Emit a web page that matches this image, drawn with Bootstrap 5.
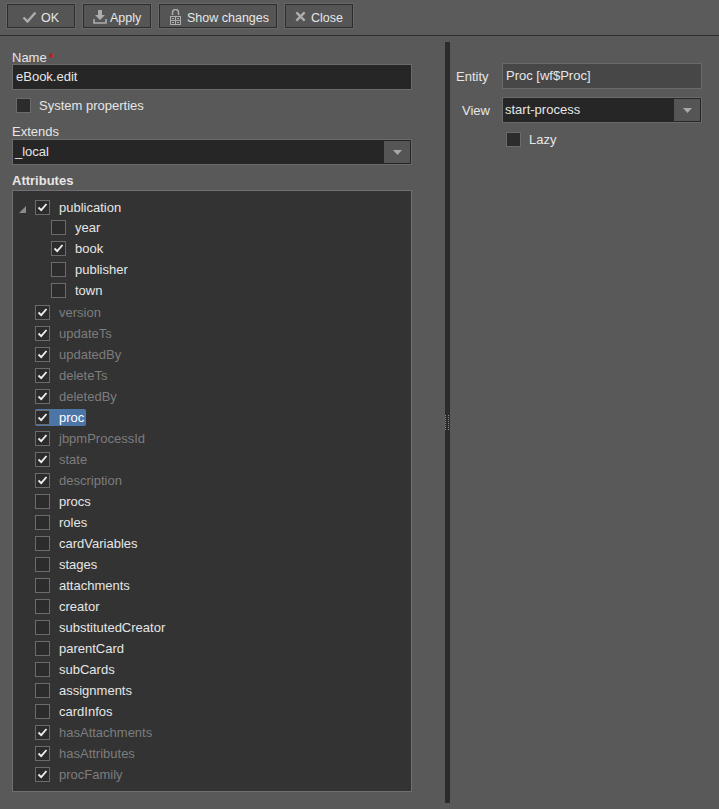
<!DOCTYPE html>
<html lang="en"><head><meta charset="utf-8"><title>View editor</title>
<link rel="stylesheet" href="https://cdn.jsdelivr.net/npm/bootstrap@5.3.0/dist/css/bootstrap.min.css">
<style>
html,body{height:100%;}
body{background:#595959;color:#e6e6e6;font-family:"Liberation Sans",Arial,sans-serif;font-size:13px;line-height:15px;overflow:hidden;}
.bar{height:36px;padding:4px 7px 0;gap:8px;border-bottom:1px solid #2f2f2f;background:#5b5b5b;}
.tbtn{height:24px;background:#555;border:1px solid #2d2d2d;box-shadow:0 0 0 1px #666;color:#e6e6e6;font-size:12.5px;padding:5px 0 0 12px;gap:4px;border-radius:0;white-space:nowrap;}
.tbtn svg{flex:none;margin-top:-4px;}
.w-ok{width:68px;padding-left:14px;}.w-apply{width:68px;padding-left:9px;gap:3px;}.w-show{width:118px;padding-left:9px;gap:5px;}.w-close{width:68px;padding-left:9px;gap:5px;}
.panes{height:773px;}
.pane-l{width:445px;padding:7px 33px 0 12px;flex:none;}
.split{width:5px;height:761px;margin-top:6px;background:#2b2b2b;flex:none;}
.grip{display:grid;grid-template-columns:2px 2px;gap:1px;}
.grip i{width:1px;height:1px;background:#8a8a8a;display:block;}
.pane-r{flex:1;padding:27px 17px 0 6px;}
.lbl{display:block;height:15px;}
.req{color:#e00;margin-left:2px;}
.field{height:26px;background:#262626;border:1px solid #6a6a6a;color:#e6e6e6;padding:0 3px;line-height:24px;}
.field.ro{background:#474747;}
.sel{height:26px;background:#262626;border:1px solid #6a6a6a;line-height:23px;padding:0 0 0 2px;}
.sel span{flex:1;}
.arrow{width:26px;margin:1px;background:#555;}
.cb{width:15px;height:15px;background:#2c2c2c;border:1px solid #6b6b6b;flex:none;}
.sys{height:16px;margin:7px 0 0 4px;gap:8px;}
.tree{height:602px;margin-top:2px;background:#333;border:1px solid #707070;padding:6px 0 0 22px;}
.trow{height:21px;gap:9px;}
.trow.first{height:20px;}
.trow.sub{margin-left:16px;}
.trow.gap{margin-top:1px;}
.tname{padding:1px 2px 1px 0;}
.muted{color:#7d7d7d;}
.sel-row{background:#4d76a8;border-radius:2px;gap:9px;}
.sel-row .tname{color:#fff;padding-right:2px;}
.tog{position:absolute;margin-left:-16px;margin-top:4px;}
.rlab{width:46px;flex:none;}
.rlab-end{text-align:right;padding-right:12px;}
.lazy{margin:9px 0 0 50px;gap:8px;}
.name-lbl{height:14px;}
.ext-lbl{margin-top:11px;}
</style></head><body>
<div class="bar d-flex align-items-start">
<button class="btn tbtn w-ok d-flex align-items-center"><svg width="15" height="12" viewBox="0 0 15 12"><path d="M1.500 6.500 5.500 10.500 13.500 1.500" fill="none" stroke="#adadad" stroke-width="2.400"/></svg>OK</button>
<button class="btn tbtn w-apply d-flex align-items-center"><svg width="14" height="14" viewBox="0 0 14 14"><path d="M5 0h4v5h3L7 10 2 5h3z" fill="#adadad"/><path d="M1 9v4h12V9" fill="none" stroke="#adadad" stroke-width="1.600"/></svg>Apply</button>
<button class="btn tbtn w-show d-flex align-items-center"><svg width="13" height="16" viewBox="0 0 13 16"><path d="M3.500 6V3.500a3 3 0 0 1 6 0V6" fill="none" stroke="#adadad" stroke-width="1.500"/><rect x="1.500" y="7.500" width="10" height="8" fill="none" stroke="#adadad"/><path d="M6.500 7.500v8M1.500 11.500h10M3 9.500h2M8 9.500h2M3 13.500h2M8 13.500h2" stroke="#adadad" fill="none"/></svg>Show changes</button>
<button class="btn tbtn w-close d-flex align-items-center"><svg width="11" height="11" viewBox="0 0 12 12"><path d="M1.500 1.500l9 9M10.500 1.500l-9 9" stroke="#adadad" stroke-width="2.600" fill="none"/></svg>Close</button>
</div>
<div class="panes d-flex">
<div class="pane-l">
<div style="height:7px"></div>
<label class="lbl name-lbl">Name<span class="req">*</span></label>
<div class="field">eBook.edit</div>
<div class="sys d-flex align-items-center"><span class="cb"></span><span>System properties</span></div>
<label class="lbl ext-lbl">Extends</label>
<div class="sel d-flex"><span>_local</span><div class="arrow d-flex align-items-center justify-content-center"><svg width="9" height="5"><path d="M0 0h9L4.500 5z" fill="#a8a8a8"/></svg></div></div>
<div class="fw-bold" style="margin-top:8px;height:15px">Attributes</div>
<div class="tree" id="tree"></div>
</div>
<div class="split d-flex align-items-center justify-content-center"><div class="grip" id="grip"></div></div>
<div class="pane-r">
<div class="d-flex align-items-center"><span class="rlab">Entity</span><div class="field ro flex-fill">Proc [wf$Proc]</div></div>
<div class="d-flex align-items-center" style="margin-top:8px"><span class="rlab rlab-end">View</span><div class="sel d-flex flex-fill"><span>start-process</span><div class="arrow d-flex align-items-center justify-content-center"><svg width="9" height="5"><path d="M0 0h9L4.500 5z" fill="#a8a8a8"/></svg></div></div></div>
<div class="lazy d-flex align-items-center"><span class="cb"></span><span>Lazy</span></div>
</div>
</div>
<script>
var chk='<svg width="13" height="13" viewBox="0 0 13 13" style="display:block"><path d="M2.500 6.500 5.200 9.200 10.500 3" fill="none" stroke="#f0f0f0" stroke-width="1.800"/></svg>';
var rows=[["publication",1,0,0],["year",0,0,1],["book",1,0,1],["publisher",0,0,1],["town",0,0,1],
["version",1,1],["updateTs",1,1],["updatedBy",1,1],["deleteTs",1,1],["deletedBy",1,1],["proc",1,2],["jbpmProcessId",1,1],["state",1,1],["description",1,1],
["procs",0],["roles",0],["cardVariables",0],["stages",0],["attachments",0],["creator",0],["substitutedCreator",0],["parentCard",0],["subCards",0],["assignments",0],["cardInfos",0],["hasAttachments",1,1],["hasAttributes",1,1],["procFamily",1,1]];
document.getElementById('tree').innerHTML=rows.map(function(r,i){
var inner='<span class="cb">'+(r[1]?chk:'')+'</span><span class="tname'+(r[2]==1?' muted':'')+'">'+r[0]+'</span>';
if(r[2]==2) inner='<span class="d-inline-flex align-items-center sel-row">'+inner+'</span>';
var tog=i==0?'<svg class="tog" width="7" height="7"><path d="M7 0v7H0z" fill="#8a8a8a"/></svg>':'';
return '<div class="trow d-flex align-items-center'+(i==0?' first':'')+(r[3]?' sub':'')+(i==5?' gap':'')+'">'+tog+inner+'</div>';
}).join('');
var g='';for(var i=0;i<16;i++)g+='<i></i>';document.getElementById('grip').innerHTML=g;
</script>
<script src="https://cdn.jsdelivr.net/npm/bootstrap@5.3.0/dist/js/bootstrap.bundle.min.js"></script>
</body></html>
